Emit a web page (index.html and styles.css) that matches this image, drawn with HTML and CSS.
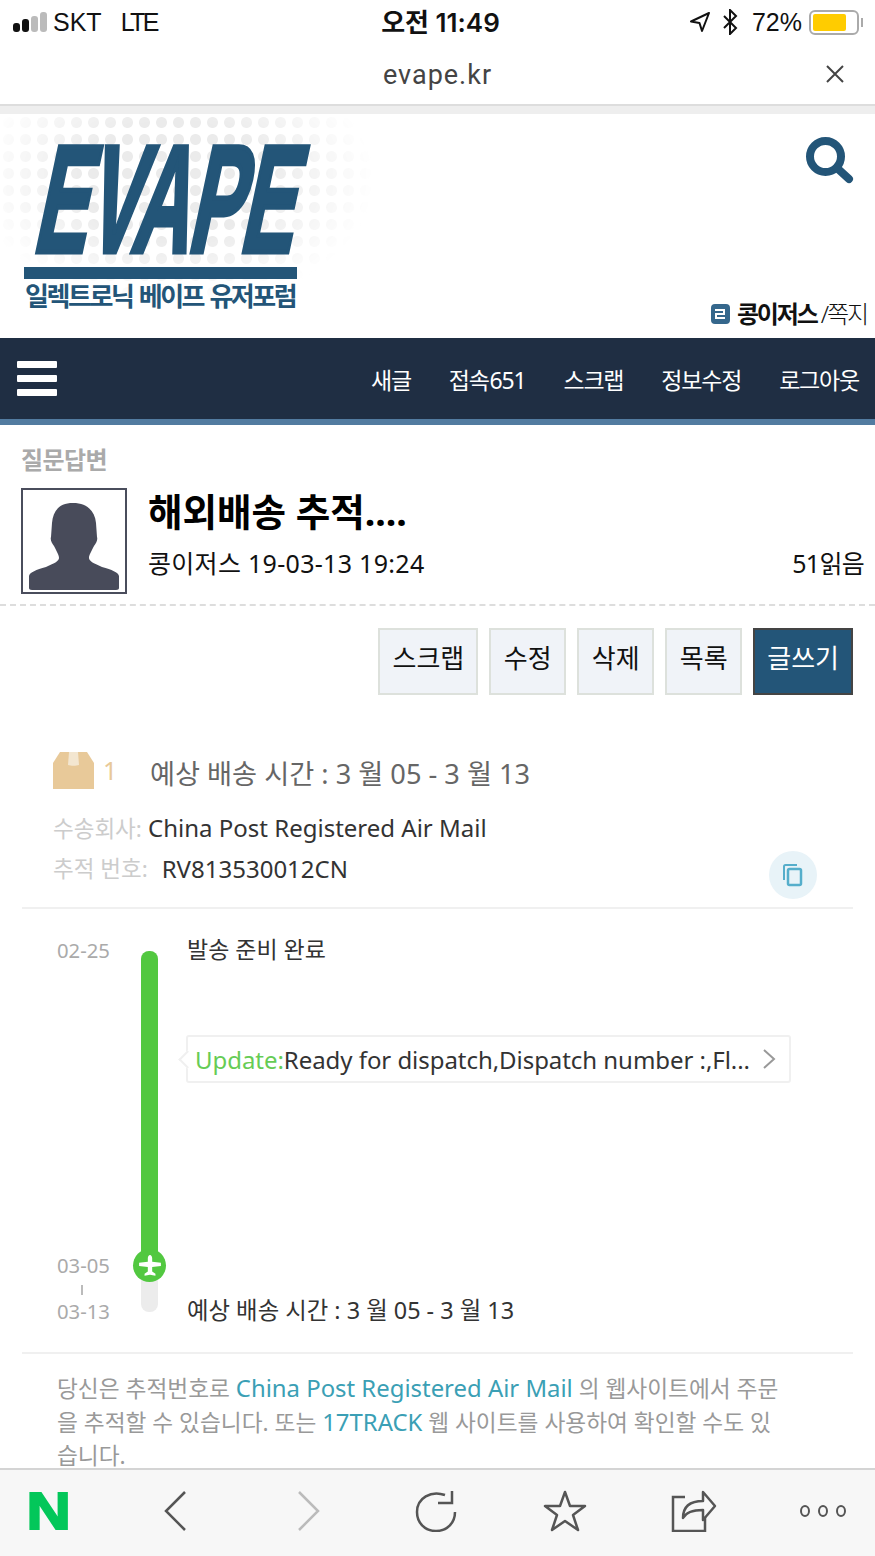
FILE: index.html
```html
<!DOCTYPE html>
<html lang="ko">
<head>
    <meta charset="UTF-8">
    <title>evape.kr</title>
    <link rel="stylesheet" href="styles.css">
</head>
<body>
    <div class="phone">
        <!-- iOS status bar -->
        <div class="statusBar">
            <div class="statusLeft">
                <span class="signal"><i class="on"></i><i class="on"></i><i></i><i></i></span>
                <span>SKT</span>
                <span class="lte">LTE</span>
            </div>
            <div class="statusTime">오전 11:49</div>
            <div class="statusRight">
                <svg class="locIcon" width="22" height="22" viewBox="0 0 22 22"><path d="M20 2 2 10.5l8.5 1.500L13 20z" fill="none" stroke="#111" stroke-width="2" stroke-linejoin="round"/></svg>
                <svg class="btIcon" width="16" height="26" viewBox="0 0 16 26"><path d="M2 7l12 12-6 6V1l6 6L2 19" fill="none" stroke="#111" stroke-width="2"/></svg>
                <span>72%</span>
                <span class="battery"><b></b></span>
                <span class="batteryTip"></span>
            </div>
        </div>

        <div class="addressBar">
            <span class="addressText">evape.kr</span>
            <svg class="closeIcon" width="20" height="20" viewBox="0 0 20 20"><path d="M2 2l16 16M18 2 2 18" stroke="#444" stroke-width="2"/></svg>
        </div>
        <div class="addressGap"></div>

        <div class="page">
            <header class="siteHeader">
                <div class="logo">
                    <div class="logoWord">EVAPE</div>
                    <div class="logoBar"></div>
                    <div class="logoTag">일렉트로닉 베이프 유저포럼</div>
                </div>
                <div class="headerSide">
                    <svg class="searchIcon" width="48" height="48" viewBox="0 0 48 48"><circle cx="19.500" cy="19.500" r="15.500" fill="none" stroke="#235578" stroke-width="8"/><path d="M31 31l12 11" stroke="#235578" stroke-width="8" stroke-linecap="round"/></svg>
                    <div class="userLine">
                        <span class="levelBadge">
                            <svg width="12" height="12" viewBox="0 0 12 12"><path d="M1 2h9v4H2v4h9" fill="none" stroke="#fff" stroke-width="2"/></svg>
                        </span>
                        <b>콩이저스</b><span class="userMsg">/쪽지</span>
                    </div>
                </div>
            </header>

            <nav class="mainNav">
                <div class="burger"><i></i><i></i><i></i></div>
                <div class="navLinks">
                    <a>새글</a>
                    <a>접속 651</a>
                    <a>스크랩</a>
                    <a>정보수정</a>
                    <a>로그아웃</a>
                </div>
            </nav>

            <section class="postHead">
                <div class="boardName">질문답변</div>
                <div class="postInfo">
                    <div class="avatar">
                        <svg width="102" height="102" viewBox="0 0 102 102"><path d="M50 13c14 0 22 8 23 20l1 14c1 3-1 6-3 9-3 6-5 9-5 12 0 3 4 5 13 9 10 3 16 5 17 9v12c0 1-1 2-3 2H9c-2 0-3-1-3-2V86c1-4 7-6 17-9 9-4 13-6 13-9 0-3-2-6-5-12-2-3-4-6-3-9l1-14c1-12 7-20 21-20z" fill="#484b5a"/></svg>
                    </div>
                    <div class="postText">
                        <h1 class="postTitle">해외배송 추적....</h1>
                        <div class="postMeta">
                            <span>콩이저스 19-03-13 19:24</span>
                            <span class="readCount">51읽음</span>
                        </div>
                    </div>
                </div>
            </section>

            <div class="btnRow">
                <a class="btn">스크랩</a>
                <a class="btn">수정</a>
                <a class="btn">삭제</a>
                <a class="btn">목록</a>
                <a class="btn btnWrite">글쓰기</a>
            </div>

            <section class="tracking">
                <div class="trackTop">
                    <div class="etaRow">
                        <svg class="boxIcon" width="41" height="37" viewBox="0 0 41 37"><path d="M7 0h27l7 11v26H0V11z" fill="#e8c999"/><path d="M16 0h9l1 13c-3 1-8 1-11 0z" fill="#f3e6d0"/></svg>
                        <span class="pkgCount">1</span>
                        <span class="etaText">예상 배송 시간 : 3 월 05 - 3 월 13</span>
                    </div>
                    <div class="carrierRow"><span class="fieldLabel">수송회사:</span> China Post Registered Air Mail</div>
                    <div class="numberRow">
                        <span class="fieldLabel">추적 번호:</span>
                        <span class="trackNo">RV813530012CN</span>
                        <span class="copyBtn">
                            <svg width="24" height="24" viewBox="0 0 24 24"><path d="M3 17V3.500c0-1 .5-1.500 1.500-1.500H16" fill="none" stroke="#55aecb" stroke-width="2"/><rect x="7" y="6" width="13" height="16" rx="1.500" fill="none" stroke="#55aecb" stroke-width="2.500"/></svg>
                        </span>
                    </div>
                </div>

                <div class="timeline">
                    <div class="tlDates">
                        <span>02-25</span>
                        <div class="tlDatesEnd">
                            <span>03-05</span>
                            <i class="tlTick"></i>
                            <span>03-13</span>
                        </div>
                    </div>
                    <div class="tlBar">
                        <div class="tlGreen"></div>
                        <div class="tlPlane">
                            <svg width="24" height="24" viewBox="0 0 22 22"><path d="M11 1c1 0 2 1.500 2 3v3l8 1v3l-8 1v4l3 2v2l-5-1-5 1v-2l3-2v-4l-8-1V8l8-1V4c0-1.500 1-3 2-3z" fill="#fff"/></svg>
                        </div>
                    </div>
                    <div class="tlEvents">
                        <div class="tlFirst">발송 준비 완료</div>
                        <div class="tlUpdate">
                            <span class="tlUpdateText"><em>Update:</em>Ready for dispatch,Dispatch number :,Fl...</span>
                            <svg width="14" height="22" viewBox="0 0 14 22"><path d="M2 2l10 9-10 9" fill="none" stroke="#999" stroke-width="2"/></svg>
                        </div>
                        <div class="tlLast">예상 배송 시간 : 3 월 05 - 3 월 13</div>
                    </div>
                </div>

                <p class="trackNote">당신은 추적번호로 <a>China Post Registered Air Mail</a> 의 웹사이트에서 주문을 추적할 수 있습니다. 또는 <a>17TRACK</a> 웹 사이트를 사용하여 확인할 수도 있습니다.</p>
            </section>
        </div>

        <!-- browser toolbar -->
        <div class="toolbar">
            <span class="toolItem"><span class="naverN">N</span></span>
            <span class="toolItem"><svg class="chevBack" width="24" height="40" viewBox="0 0 24 40"><path d="M22 1 3 20l19 19" fill="none" stroke="#555" stroke-width="2.500"/></svg></span>
            <span class="toolItem"><svg class="chevNext" width="24" height="40" viewBox="0 0 24 40"><path d="M2 1l19 19L2 39" fill="none" stroke="#bbb" stroke-width="2.500"/></svg></span>
            <span class="toolItem"><svg width="44" height="42" viewBox="0 0 44 42"><path d="M31 5C17 0 3 8 3 22c0 11 8 19 19 19s19-8 19-19" fill="none" stroke="#555" stroke-width="2.500"/><path d="M38 1v12H24" fill="none" stroke="#555" stroke-width="2.500"/></svg></span>
            <span class="toolItem"><svg width="44" height="42" viewBox="0 0 44 42"><path d="M22 2l5 14h15L30 25l5 15-13-9-13 9 5-15L2 16h15z" fill="none" stroke="#555" stroke-width="2.500" stroke-linejoin="round"/></svg></span>
            <span class="toolItem"><svg width="46" height="42" viewBox="0 0 46 42"><path d="M14 7H2v34h32V27" fill="none" stroke="#555" stroke-width="2.500"/><path d="M12 28c0-11 7-17 20-17V2l12 14-12 14V20c-10 0-17 2-20 8z" fill="none" stroke="#555" stroke-width="2.500" stroke-linejoin="round"/></svg></span>
            <span class="toolItem moreDots"><i></i><i></i><i></i></span>
        </div>
    </div>
</body>
</html>
```

FILE: styles.css
```css
* {
    box-sizing: border-box;
}
html, body {
    margin: 0;
    padding: 0;
}
body {
    font-family: "Noto Sans", "Noto Sans CJK KR", sans-serif;
    background-color: #fff;
    color: #111;
}
.phone {
    width: 875px;
    height: 1556px;
    overflow: hidden;
    display: flex;
    flex-direction: column;
}

/* status bar */
.statusBar {
    height: 46px;
    flex: none;
    display: flex;
    align-items: center;
    justify-content: space-between;
    font-family: "Liberation Sans", "Noto Sans CJK KR", sans-serif;
    font-size: 25px;
    padding: 0 12px 2px 13px;
}
.statusLeft, .statusRight {
    display: flex;
    align-items: center;
    width: 290px;
}
.statusRight {
    justify-content: flex-end;
}
.signal {
    display: flex;
    align-items: flex-end;
    gap: 2px;
    margin-right: 6px;
}
.signal i {
    width: 7px;
    background-color: #bbb;
    border-radius: 3px;
}
.signal i.on {
    background-color: #111;
}
.signal i:nth-child(1) { height: 9px; }
.signal i:nth-child(2) { height: 13px; }
.signal i:nth-child(3) { height: 16px; }
.signal i:nth-child(4) { height: 20px; }
.lte {
    margin-left: 19px;
    letter-spacing: -2.600px;
}
.statusTime {
    font-size: 26px;
    font-family: "Inter", "Noto Sans CJK KR", sans-serif;
    font-weight: 600;
    margin: -4px 0 0 5px;
}
.locIcon {
    margin-right: 11px;
}
.btIcon {
    margin-right: 14px;
}
.battery {
    width: 50px;
    height: 25px;
    border: 2px solid #aaa;
    border-radius: 6px;
    padding: 2px;
    margin-left: 7px;
    display: flex;
}
.battery b {
    width: 33px;
    background-color: #fc0;
    border-radius: 2px;
}
.batteryTip {
    width: 2px;
    height: 9px;
    background-color: #aaa;
    margin-left: 2px;
}

/* address bar */
.addressBar {
    height: 60px;
    flex: none;
    display: flex;
    align-items: center;
    justify-content: center;
    position: relative;
    font-size: 27px;
    color: #444;
    border-bottom: 2px solid #ddd;
}
.addressText {
    font-family: "Roboto", sans-serif;
    letter-spacing: 1px;
}
.closeIcon {
    position: absolute;
    right: 30px;
    top: 18px;
}
.addressGap {
    height: 8px;
    flex: none;
    background-color: #eee;
}

.page {
    flex: 1;
    overflow: hidden;
}

/* site header */
.siteHeader {
    height: 224px;
    display: flex;
    justify-content: space-between;
}
.logo {
    width: 380px;
    padding: 31px 0 0 24px;
    position: relative;
}
.logo::before {
    content: "";
    position: absolute;
    left: 0;
    top: 0;
    right: 0;
    bottom: 6px;
    background-image: radial-gradient(circle, #ebebeb 5px, transparent 6px);
    background-size: 17px 17px;
    -webkit-mask-image: radial-gradient(ellipse 200px 130px at 46% 30%, #000 45%, transparent 100%);
    mask-image: radial-gradient(ellipse 200px 130px at 46% 30%, #000 45%, transparent 100%);
}
.logoWord {
    position: relative;
    width: 275px;
    height: 108px;
    margin-left: 7px;
    font-family: "Liberation Sans", sans-serif;
    font-weight: bold;
    font-size: 153px;
    line-height: 108px;
    color: #235578;
    -webkit-text-stroke: 5px #235578;
    letter-spacing: -3px;
    white-space: nowrap;
    transform-origin: 0 100%;
    transform: skewX(-12deg) scaleX(0.525);
}
.logoBar {
    position: relative;
    width: 273px;
    height: 12px;
    margin-top: 14px;
    background-color: #235578;
}
.logoTag {
    position: relative;
    margin: 0 0 0 1px;
    font-size: 26px;
    line-height: 34px;
    font-weight: bold;
    color: #235578;
    letter-spacing: -2.450px;
    word-spacing: 2px;
    white-space: nowrap;
}
.headerSide {
    display: flex;
    flex-direction: column;
    align-items: flex-end;
    justify-content: space-between;
    padding: 23px 8px 6px 0;
}
.searchIcon {
    margin-right: 13px;
}
.userLine {
    display: flex;
    align-items: center;
    font-size: 24px;
    letter-spacing: -2.100px;
    line-height: 36px;
}
.levelBadge {
    width: 19px;
    height: 20px;
    margin-right: 7px;
    background-color: #35678c;
    border-radius: 4px;
    display: flex;
    align-items: center;
    justify-content: center;
}
.userMsg {
    margin-left: 4px;
    font-weight: 300;
}

/* nav */
.mainNav {
    height: 87px;
    background-color: #1f2e43;
    border-bottom: 6px solid #527ba0;
    display: flex;
    align-items: center;
    justify-content: space-between;
    padding: 0 16px 0 17px;
}
.burger {
    width: 40px;
    display: flex;
    flex-direction: column;
    gap: 7px;
}
.burger i {
    height: 7px;
    background-color: #fff;
    border-radius: 1px;
}
.navLinks {
    display: flex;
    gap: 38px;
    color: #fff;
    font-size: 23px;
    letter-spacing: -1.200px;
    word-spacing: -4px;
}

/* post head */
.postHead {
    padding: 17px 11px 0 21px;
    height: 181px;
    border-bottom: 2px dashed #ddd;
}
.boardName {
    font-size: 24px;
    line-height: 36px;
    font-weight: bold;
    color: #aaa;
    letter-spacing: -0.6px;
}
.postInfo {
    display: flex;
    margin-top: 10px;
}
.avatar {
    width: 106px;
    height: 106px;
    flex: none;
    border: 2px solid #4a4d5c;
    margin-right: 21px;
}
.postText {
    flex: 1;
}
.postTitle {
    margin: 0;
    font-size: 37.500px;
    line-height: 48px;
    font-weight: bold;
    color: #000;
}
.postMeta {
    display: flex;
    justify-content: space-between;
    font-size: 25px;
    line-height: 36px;
    margin-top: 9px;
    letter-spacing: 0.3px;
}
.readCount {
    letter-spacing: -0.7px;
}

/* buttons */
.btnRow {
    display: flex;
    justify-content: flex-end;
    gap: 11px;
    padding: 22px 22px 0 0;
}
.btn {
    height: 67px;
    min-width: 77px;
    padding: 0 12px 10px;
    display: flex;
    align-items: center;
    justify-content: center;
    border: 2px solid #dde1dc;
    background-color: #f0f3f8;
    font-size: 26px;
    color: #111;
}
.btnWrite {
    background-color: #235578;
    border-color: #444;
    color: #fff;
}

/* tracking card */
.tracking {
    padding: 0 22px;
    margin-top: 55px;
}
.trackTop {
    height: 159px;
    padding: 1px 0 0 31px;
    border-bottom: 2px solid #f0f0f0;
}
.etaRow {
    display: flex;
    align-items: center;
    height: 38px;
}
.pkgCount {
    margin-left: 9px;
    width: 47px;
    font-size: 25px;
    color: #e8c999;
}
.etaText {
    font-size: 27.200px;
    color: #666;
    margin-top: 4px;
}
.carrierRow, .numberRow {
    font-size: 24px;
    color: #333;
    line-height: 40px;
}
.carrierRow {
    margin-top: 19px;
}
.numberRow {
    display: flex;
    align-items: center;
    height: 40px;
}
.fieldLabel {
    font-size: 22.500px;
    color: #ccc;
}
.trackNo {
    margin-left: 14px;
}
.copyBtn {
    width: 48px;
    height: 48px;
    border-radius: 50%;
    background-color: #e8f3f8;
    margin-left: auto;
    margin-right: 36px;
    margin-top: 12px;
    display: flex;
    align-items: center;
    justify-content: center;
}

/* timeline */
.timeline {
    display: flex;
    height: 445px;
    padding: 26px 0 0 35px;
    border-bottom: 2px solid #f0f0f0;
}
.tlDates {
    width: 84px;
    height: 391px;
    display: flex;
    flex-direction: column;
    justify-content: space-between;
    font-size: 20.300px;
    line-height: 30px;
    color: #aaa;
}
.tlDatesEnd {
    display: flex;
    flex-direction: column;
}
.tlTick {
    width: 2px;
    height: 10px;
    background-color: #bbb;
    margin: 5px 0 1px 24px;
}
.tlBar {
    width: 17px;
    height: 361px;
    margin-top: 16px;
    background-color: #ececec;
    border-radius: 8px;
    position: relative;
}
.tlGreen {
    height: 316px;
    background-color: #52c840;
    border-radius: 8px 8px 0 0;
}
.tlPlane {
    position: absolute;
    left: -8px;
    top: 298px;
    width: 33px;
    height: 33px;
    border-radius: 50%;
    background-color: #52c840;
    display: flex;
    align-items: center;
    justify-content: center;
}
.tlEvents {
    margin-left: 29px;
    width: 605px;
    height: 392px;
    display: flex;
    flex-direction: column;
    font-size: 23px;
    color: #333;
}
.tlFirst {
    line-height: 34px;
    margin-top: -3px;
}
.tlUpdate {
    margin: 69px 0 0 -1px;
    width: 605px;
    height: 48px;
    display: flex;
    align-items: center;
    justify-content: space-between;
    border: 2px solid #f0f0f0;
    border-radius: 3px;
    padding: 0 13px 0 7px;
    font-size: 24px;
    letter-spacing: -0.05px;
    color: #333;
    position: relative;
}
/* little pointer on the left of the bubble */
.tlUpdate::before {
    content: "";
    position: absolute;
    left: -7px;
    top: 16px;
    width: 11px;
    height: 11px;
    background-color: #fff;
    border-left: 2px solid #f0f0f0;
    border-bottom: 2px solid #f0f0f0;
    transform: rotate(45deg);
}
.tlUpdateText {
    position: relative;
}
.tlUpdate em {
    font-style: normal;
    color: #66cc55;
}
.tlLast {
    margin-top: auto;
    line-height: 34px;
    font-size: 23.400px;
}
.trackNote {
    margin: 17px 0 0;
    padding: 0 66px 0 35px;
    font-size: 22.700px;
    line-height: 33px;
    color: #999;
}
.trackNote a {
    font-size: 23.900px;
    color: #3b9fb5;
}

/* browser toolbar */
.toolbar {
    height: 88px;
    flex: none;
    background-color: #f7f7f7;
    border-top: 2px solid #d4d4d4;
    display: flex;
    align-items: center;
    justify-content: space-between;
    padding: 0 29px 4px 26px;
}
.toolItem {
    width: 46px;
    display: flex;
    align-items: center;
    justify-content: center;
}
.chevBack {
    margin-right: 6px;
}
.chevNext {
    margin-left: 4px;
}
.naverN {
    font-family: "Liberation Sans", sans-serif;
    font-weight: bold;
    font-size: 52px;
    line-height: 40px;
    color: #03c75a;
    -webkit-text-stroke: 2px #03c75a;
    transform: scaleX(1.18);
}
.moreDots {
    gap: 8px;
}
.moreDots i {
    width: 10px;
    height: 12px;
    flex: none;
    border: 2px solid #555;
    border-radius: 50%;
}
```
